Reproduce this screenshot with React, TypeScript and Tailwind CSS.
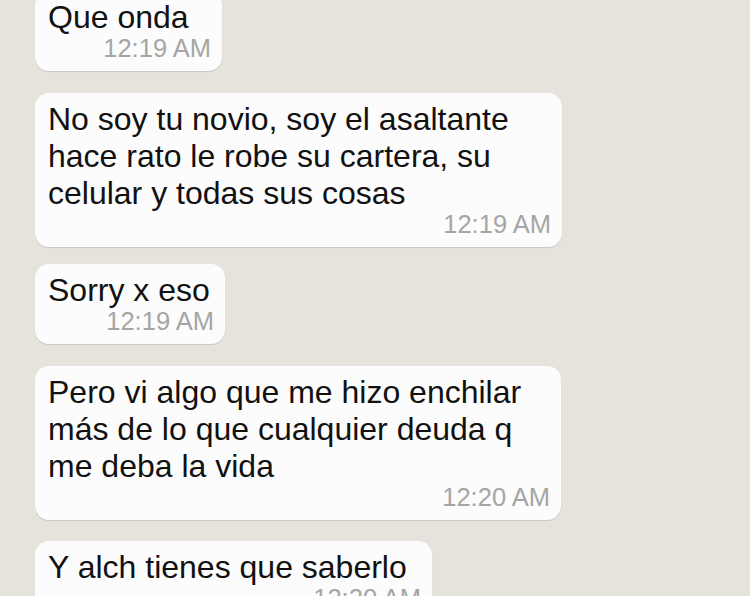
import React from "react";

type Msg = { lines: string[]; time: string; w: string; mt: string };

const msgs: Msg[] = [
  { lines: ["Que onda"], time: "12:19 AM", w: "w-[187px]", mt: "mt-[-9px]" },
  {
    lines: [
      "No soy tu novio, soy el asaltante",
      "hace rato le robe su cartera, su",
      "celular y todas sus cosas",
    ],
    time: "12:19 AM",
    w: "w-[527px]",
    mt: "mt-[22px]",
  },
  { lines: ["Sorry x eso"], time: "12:19 AM", w: "w-[190px]", mt: "mt-[17px]" },
  {
    lines: [
      "Pero vi algo que me hizo enchilar",
      "más de lo que cualquier deuda q",
      "me deba la vida",
    ],
    time: "12:20 AM",
    w: "w-[526px]",
    mt: "mt-[22px]",
  },
  { lines: ["Y alch tienes que saberlo"], time: "12:20 AM", w: "w-[397px]", mt: "mt-[21px]" },
];

export default function App() {
  return (
    <div
      className="w-[750px] h-[596px] overflow-hidden bg-[#e6e3dd] pl-[35px] flex flex-col"
      style={{ fontFamily: '"Liberation Sans", Arial, sans-serif' }}
    >
      {msgs.map((m, i) => (
        <div
          key={i}
          className={`${m.w} ${m.mt} shrink-0 bg-[#fcfcfc] rounded-[14px] shadow-[0_1px_1px_rgba(0,0,0,0.12)] pt-[8px] pb-[11px] pl-[13px] pr-[11px]`}
        >
          <div className="text-[32px] leading-[37px] text-[#111] whitespace-nowrap">
            {m.lines.map((l, j) => (
              <div key={j}>{l}</div>
            ))}
          </div>
          <div className="text-right text-[25.5px] leading-[24px] text-[#a5a5a5] whitespace-nowrap">
            {m.time}
          </div>
        </div>
      ))}
    </div>
  );
}
